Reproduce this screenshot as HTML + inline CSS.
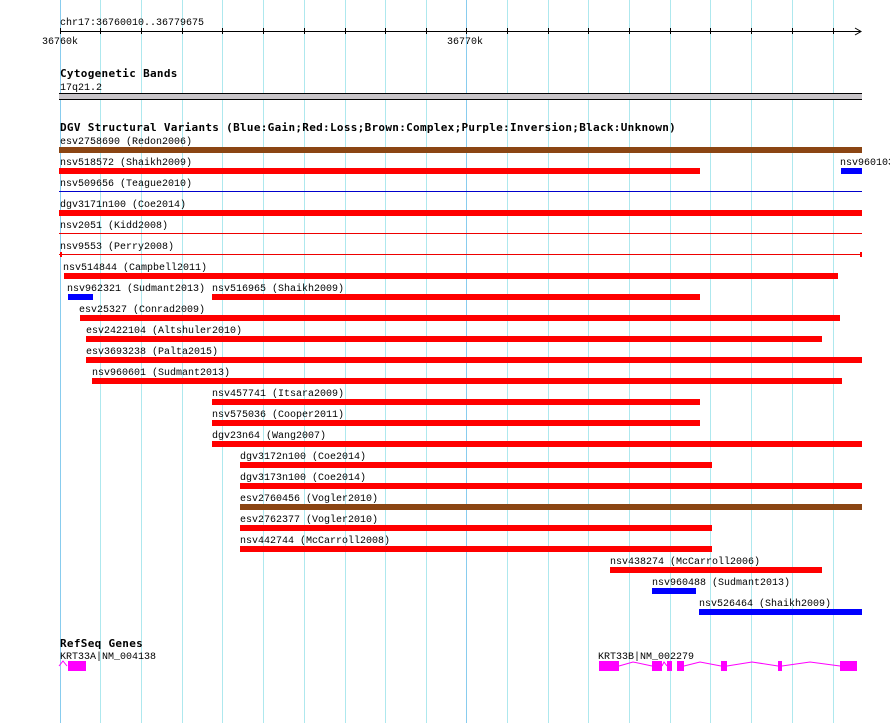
<!DOCTYPE html>
<html><head><meta charset="utf-8"><style>
body{margin:0;width:890px;height:723px;background:#fff;position:relative;overflow:hidden;font-family:"Liberation Mono","DejaVu Sans Mono",monospace;font-size:10px;color:#000}
div{position:absolute}
.g{top:0;height:723px;width:1px;background:#aee8ee}
.gd{background:#88ccee}
.t{white-space:pre;line-height:10px;margin-top:3px}
.b{height:6px}
.r{background:#f00}.bl{background:#00f}.br{background:#8b4513}
.tk{width:1px;height:6px;background:#000;top:28px}
.h{font-weight:bold;font-family:"DejaVu Sans Mono",monospace;font-size:11px;letter-spacing:0.3px;margin-top:1px}
.p{background:#f0f;height:10px;top:661px}
</style></head><body>
<div class="g gd" style="left:60px"></div><div class="g" style="left:100px"></div><div class="g" style="left:141px"></div><div class="g" style="left:182px"></div><div class="g" style="left:222px"></div><div class="g" style="left:263px"></div><div class="g" style="left:304px"></div><div class="g" style="left:345px"></div><div class="g" style="left:385px"></div><div class="g" style="left:426px"></div><div class="g gd" style="left:466px"></div><div class="g" style="left:507px"></div><div class="g" style="left:548px"></div><div class="g" style="left:588px"></div><div class="g" style="left:629px"></div><div class="g" style="left:670px"></div><div class="g" style="left:710px"></div><div class="g" style="left:751px"></div><div class="g" style="left:792px"></div><div class="g" style="left:833px"></div>

<div class="t" style="left:60px;top:16px">chr17:36760010..36779675</div>
<div style="left:60px;top:31px;width:801px;height:1px;background:#000"></div>
<div class="tk" style="left:60px"></div><div class="tk" style="left:100px"></div><div class="tk" style="left:141px"></div><div class="tk" style="left:182px"></div><div class="tk" style="left:222px"></div><div class="tk" style="left:263px"></div><div class="tk" style="left:304px"></div><div class="tk" style="left:345px"></div><div class="tk" style="left:385px"></div><div class="tk" style="left:426px"></div><div class="tk" style="left:466px"></div><div class="tk" style="left:507px"></div><div class="tk" style="left:548px"></div><div class="tk" style="left:588px"></div><div class="tk" style="left:629px"></div><div class="tk" style="left:670px"></div><div class="tk" style="left:710px"></div><div class="tk" style="left:751px"></div><div class="tk" style="left:792px"></div><div class="tk" style="left:833px"></div>
<svg style="position:absolute;left:854px;top:27px" width="10" height="10"><path d="M1 1L7 4.5L1 8" fill="none" stroke="#000"/></svg>
<div class="t" style="left:42px;top:35px">36760k</div>
<div class="t" style="left:447px;top:35px">36770k</div>

<div class="t h" style="left:60px;top:68px">Cytogenetic Bands</div>
<div class="t" style="left:60px;top:81px">17q21.2</div>
<div style="left:59px;top:93px;width:803px;height:5px;background:#c8c4c8;border-top:1px solid #000;border-bottom:1px solid #000"></div>

<div class="t h" style="left:60px;top:122px">DGV Structural Variants (Blue:Gain;Red:Loss;Brown:Complex;Purple:Inversion;Black:Unknown)</div>
<div class="t" style="left:60px;top:135px">esv2758690 (Redon2006)</div><div class="b br" style="left:59px;top:147px;width:803px"></div>
<div class="t" style="left:60px;top:156px">nsv518572 (Shaikh2009)</div><div class="b r" style="left:59px;top:168px;width:641px"></div>
<div class="t" style="left:840px;top:156px">nsv960103</div><div class="b bl" style="left:841px;top:168px;width:21px"></div>
<div class="t" style="left:60px;top:177px">nsv509656 (Teague2010)</div><div style="left:59px;top:191px;width:803px;height:1px;background:#00c"></div>
<div class="t" style="left:60px;top:198px">dgv3171n100 (Coe2014)</div><div class="b r" style="left:59px;top:210px;width:803px"></div>
<div class="t" style="left:60px;top:219px">nsv2051 (Kidd2008)</div><div style="left:59px;top:233px;width:803px;height:1px;background:#e00"></div>
<div class="t" style="left:60px;top:240px">nsv9553 (Perry2008)</div><div style="left:59px;top:254px;width:803px;height:1px;background:#e00"></div><div style="left:60px;top:252px;width:2px;height:5px;background:#f00"></div><div style="left:860px;top:252px;width:2px;height:5px;background:#f00"></div>
<div class="t" style="left:63px;top:261px">nsv514844 (Campbell2011)</div><div class="b r" style="left:64px;top:273px;width:774px"></div>
<div class="t" style="left:67px;top:282px">nsv962321 (Sudmant2013)</div><div class="b bl" style="left:68px;top:294px;width:25px"></div>
<div class="t" style="left:212px;top:282px">nsv516965 (Shaikh2009)</div><div class="b r" style="left:212px;top:294px;width:488px"></div>
<div class="t" style="left:79px;top:303px">esv25327 (Conrad2009)</div><div class="b r" style="left:80px;top:315px;width:760px"></div>
<div class="t" style="left:86px;top:324px">esv2422104 (Altshuler2010)</div><div class="b r" style="left:86px;top:336px;width:736px"></div>
<div class="t" style="left:86px;top:345px">esv3693238 (Palta2015)</div><div class="b r" style="left:86px;top:357px;width:776px"></div>
<div class="t" style="left:92px;top:366px">nsv960601 (Sudmant2013)</div><div class="b r" style="left:92px;top:378px;width:750px"></div>
<div class="t" style="left:212px;top:387px">nsv457741 (Itsara2009)</div><div class="b r" style="left:212px;top:399px;width:488px"></div>
<div class="t" style="left:212px;top:408px">nsv575036 (Cooper2011)</div><div class="b r" style="left:212px;top:420px;width:488px"></div>
<div class="t" style="left:212px;top:429px">dgv23n64 (Wang2007)</div><div class="b r" style="left:212px;top:441px;width:650px"></div>
<div class="t" style="left:240px;top:450px">dgv3172n100 (Coe2014)</div><div class="b r" style="left:240px;top:462px;width:472px"></div>
<div class="t" style="left:240px;top:471px">dgv3173n100 (Coe2014)</div><div class="b r" style="left:240px;top:483px;width:622px"></div>
<div class="t" style="left:240px;top:492px">esv2760456 (Vogler2010)</div><div class="b br" style="left:240px;top:504px;width:622px"></div>
<div class="t" style="left:240px;top:513px">esv2762377 (Vogler2010)</div><div class="b r" style="left:240px;top:525px;width:472px"></div>
<div class="t" style="left:240px;top:534px">nsv442744 (McCarroll2008)</div><div class="b r" style="left:240px;top:546px;width:472px"></div>
<div class="t" style="left:610px;top:555px">nsv438274 (McCarroll2006)</div><div class="b r" style="left:610px;top:567px;width:212px"></div>
<div class="t" style="left:652px;top:576px">nsv960488 (Sudmant2013)</div><div class="b bl" style="left:652px;top:588px;width:44px"></div>
<div class="t" style="left:699px;top:597px">nsv526464 (Shaikh2009)</div><div class="b bl" style="left:699px;top:609px;width:163px"></div>

<div class="t h" style="left:60px;top:638px">RefSeq Genes</div>
<div class="t" style="left:60px;top:650px">KRT33A|NM_004138</div>
<div class="t" style="left:598px;top:650px">KRT33B|NM_002279</div>
<svg style="position:absolute;left:0;top:0" width="890" height="723"><path d="M59 666L63 661L67 666M619 666L633 662L652 666M662 666L664 662L667 666M684 666L700 662L721 666M727 666L752 662L778 666M782 666L810 662L840 666" fill="none" stroke="#f0f" stroke-width="1"/></svg>
<div class="p" style="left:68px;width:18px"></div>
<div class="p" style="left:599px;width:20px"></div><div class="p" style="left:652px;width:10px"></div><div class="p" style="left:667px;width:5px"></div><div class="p" style="left:677px;width:7px"></div><div class="p" style="left:721px;width:6px"></div><div class="p" style="left:778px;width:4px"></div><div class="p" style="left:840px;width:17px"></div>
</body></html>
